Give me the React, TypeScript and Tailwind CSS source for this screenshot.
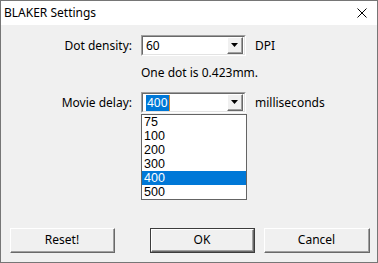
import React from "react";

const ArrowBtn = () => (
  <div className="w-[16px] h-[17px] border border-t-white border-l-white border-b-[#696969] border-r-[#696969] bg-[#f0f0f0]">
    <div className="w-full h-full border-b border-r border-[#a0a0a0] border-t-0 border-l-0 flex items-center justify-center">
      <svg width="7" height="4" viewBox="0 0 7 4">
        <path d="M0 0h7L3.5 4z" fill="#000" />
      </svg>
    </div>
  </div>
);

const Combo = ({ children }: { children: React.ReactNode }) => (
  <div className="w-[105px] h-[21px] border border-t-[#a0a0a0] border-l-[#a0a0a0] border-b-white border-r-white">
    <div className="w-full h-full border border-t-[#696969] border-l-[#696969] border-b-[#e3e3e3] border-r-[#e3e3e3] bg-white flex items-center justify-between pl-[3px] pr-[1px]">
      <div className="flex items-center">{children}</div>
      <ArrowBtn />
    </div>
  </div>
);

const Btn = ({ label, def }: { label: string; def?: boolean }) => (
  <div className={"h-[25px] " + (def ? "border border-[#3c3c3c]" : "")}>
    <div className="h-full border border-t-white border-l-white border-b-[#696969] border-r-[#696969] bg-[#f0f0f0]">
      <div className="h-full border-b border-r border-b-[#a0a0a0] border-r-[#a0a0a0] flex items-center justify-center text-[12px] text-black">
        {label}
      </div>
    </div>
  </div>
);

const items = ["75", "100", "200", "300", "400", "500"];

const App = () => {
  return (
    <div
      className="w-[378px] h-[263px] border border-[#767676] bg-[#f0f0f0] flex flex-col text-black"
      style={{ fontFamily: '"Noto Sans", sans-serif' }}
    >
      <div className="h-[24px] bg-white flex items-center justify-between pl-[3px] pr-[10px]">
        <span className="text-[12px] leading-none">BLAKER Settings</span>
        <svg width="10" height="10" viewBox="0 0 10 10">
          <path d="M0.5 0.5L9.5 9.5M9.5 0.5L0.5 9.5" stroke="#000" strokeWidth="1" />
        </svg>
      </div>

      <div className="flex-1 flex flex-col text-[12px]">
        <div className="grid grid-cols-[131px_105px_auto] gap-x-[9px] items-center pt-[10px]">
          <div className="text-right">Dot density:</div>
          <Combo>
            <span>60</span>
          </Combo>
          <div>DPI</div>

          <div />
          <div className="col-span-2 mt-[9px] h-[16px] leading-[16px]">One dot is 0.423mm.</div>

          <div className="text-right mt-[11px]">Movie delay:</div>
          <div className="relative mt-[11px]">
            <Combo>
              <span className="bg-[#0078d7] text-white px-[1px] leading-[16px]">400</span>
              <span className="w-px h-[16px] bg-[#e08a2a]" />
            </Combo>
            <div className="absolute left-0 top-full mt-px w-[106px] border border-[#646464] bg-white z-10 font-['Liberation_Sans',sans-serif] text-[12.5px]">
              {items.map((v) => (
                <div
                  key={v}
                  className={
                    "h-[14px] leading-[14px] pl-[2px] " +
                    (v === "400" ? "bg-[#0078d7] text-white" : "")
                  }
                >
                  {v}
                </div>
              ))}
            </div>
          </div>
          <div className="mt-[11px]">milliseconds</div>
        </div>

        <div className="mt-auto flex pb-[9px] pl-[9px]">
          <div className="w-[105px]">
            <Btn label="Reset!" />
          </div>
          <div className="w-[105px] ml-[35px]">
            <Btn label="OK" def />
          </div>
          <div className="w-[106px] ml-[9px]">
            <Btn label="Cancel" />
          </div>
        </div>
      </div>
    </div>
  );
};

export default App;
